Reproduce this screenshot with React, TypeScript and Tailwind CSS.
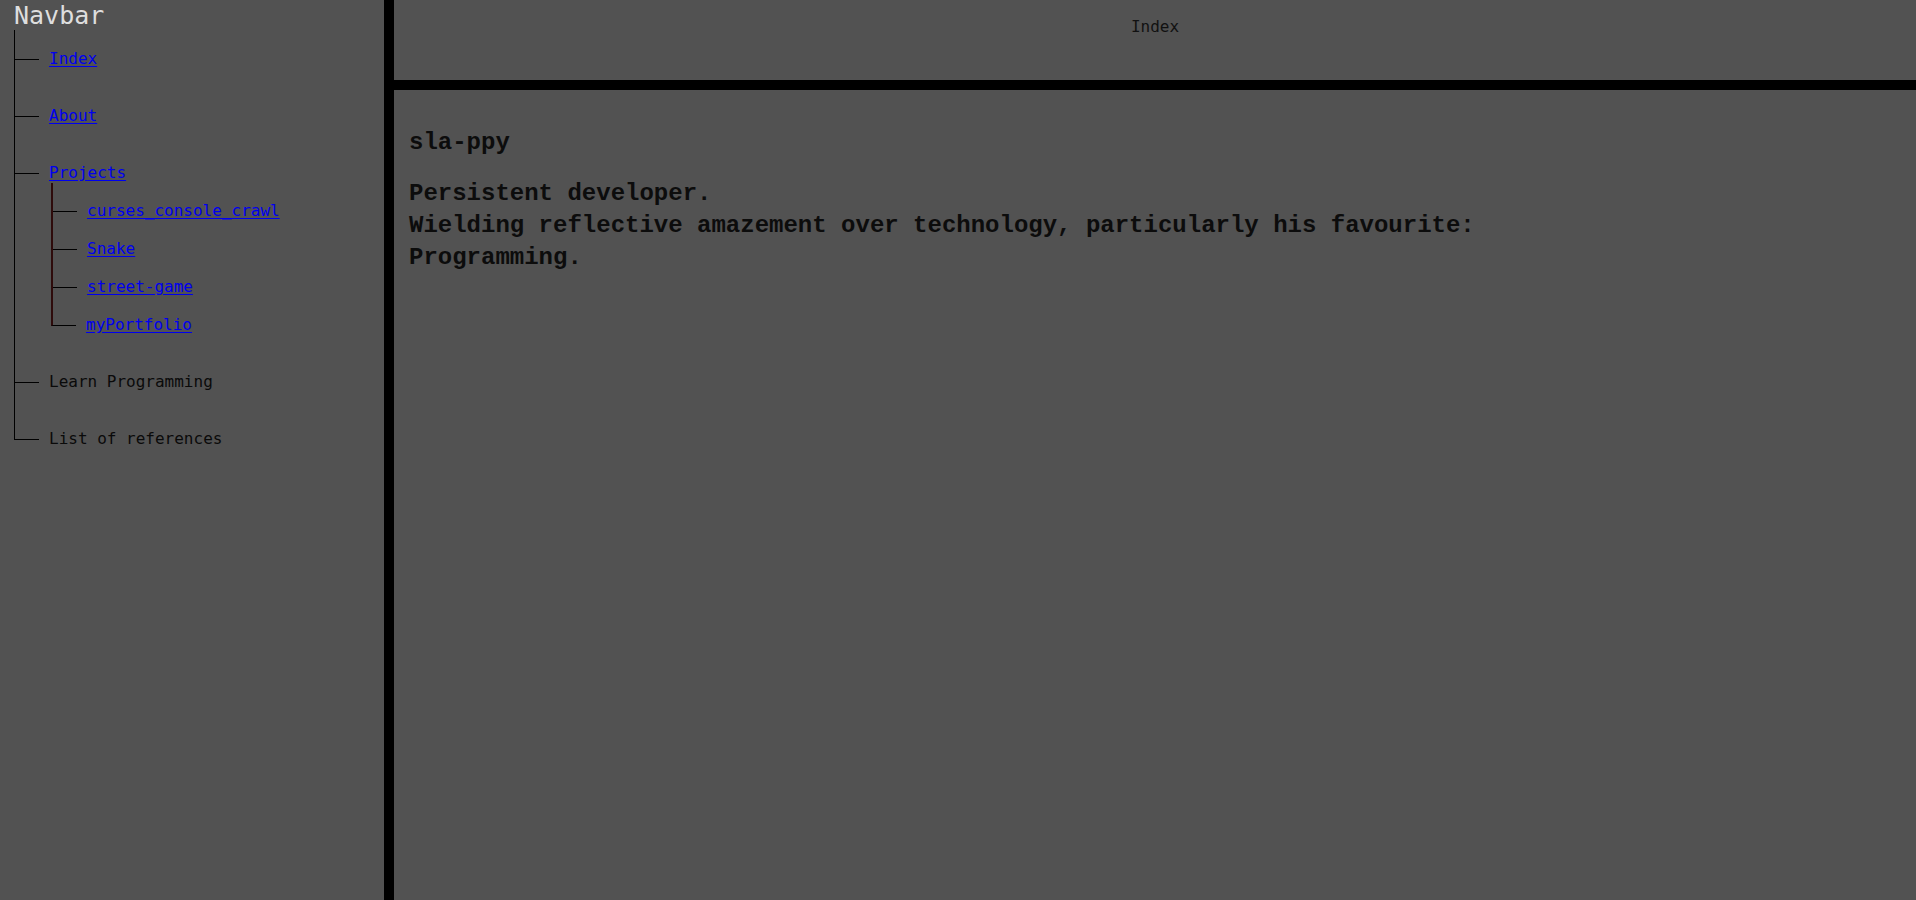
import React from 'react';

type Node = { label: string; link?: boolean; children?: Node[] };

const tree: Node[] = [
  { label: 'Index', link: true },
  { label: 'About', link: true },
  {
    label: 'Projects',
    link: true,
    children: [
      { label: 'curses_console_crawl', link: true },
      { label: 'Snake', link: true },
      { label: 'street-game', link: true },
      { label: 'myPortfolio', link: true },
    ],
  },
  { label: 'Learn Programming' },
  { label: 'List of references' },
];

const Label = ({ node }: { node: Node }) =>
  node.link ? (
    <a href="#" className="text-[#0000ee] underline underline-offset-2">{node.label}</a>
  ) : (
    <span className="text-[#0a0a0a]">{node.label}</span>
  );

const Tree = ({ nodes, sub }: { nodes: Node[]; sub?: boolean }) => {
  const line = sub ? 'border-l-2 border-l-[#2e0b0b]' : 'border-l border-l-black';
  const gap = sub ? 'pb-[18px]' : 'pb-[37px]';
  const first = sub ? 'pt-[18px]' : 'pt-[19px]';
  return (
    <ul className={sub ? 'ml-[36px]' : 'ml-[14px]'}>
      {nodes.map((node, i) => {
        const last = i === nodes.length - 1;
        return (
          <li key={node.label} className={`${last ? '' : line + ' ' + gap} ${i === 0 ? first : ''}`}>
            <div className="flex h-5 items-center leading-5">
              {last ? (
                <div className={`self-start h-[11px] w-[25px] border-b border-b-black ${line}`} />
              ) : (
                <div className="h-px w-[24px] bg-black" />
              )}
              <div className="ml-[10px]">
                <Label node={node} />
              </div>
            </div>
            {node.children && <Tree nodes={node.children} sub />}
          </li>
        );
      })}
    </ul>
  );
};

export default function App() {
  return (
    <div className="flex h-[900px] w-full bg-[#525252]">
      <aside className="w-[394px] shrink-0 border-r-[10px] border-black text-[16px] font-['DejaVu_Sans_Mono',monospace]">
        <div className="h-[30px] pl-[14px] pt-px text-[25px] leading-[30px] text-[#dedede]">Navbar</div>
        <Tree nodes={tree} />
      </aside>
      <main className="flex flex-1 flex-col">
        <header className="h-[90px] border-b-[10px] border-black pt-[17px] text-center text-[16px] leading-5 text-[#111] font-['DejaVu_Sans_Mono',monospace]">
          Index
        </header>
        <section className="px-[15px] pt-[37px] font-['Liberation_Mono',monospace] text-[24px] font-bold leading-8 text-[#0c0c0c]">
          <h1>sla-ppy</h1>
          <p className="mt-[19px]">
            Persistent developer.
            <br />
            Wielding reflective amazement over technology, particularly his favourite:
            <br />
            Programming.
          </p>
        </section>
      </main>
    </div>
  );
}
